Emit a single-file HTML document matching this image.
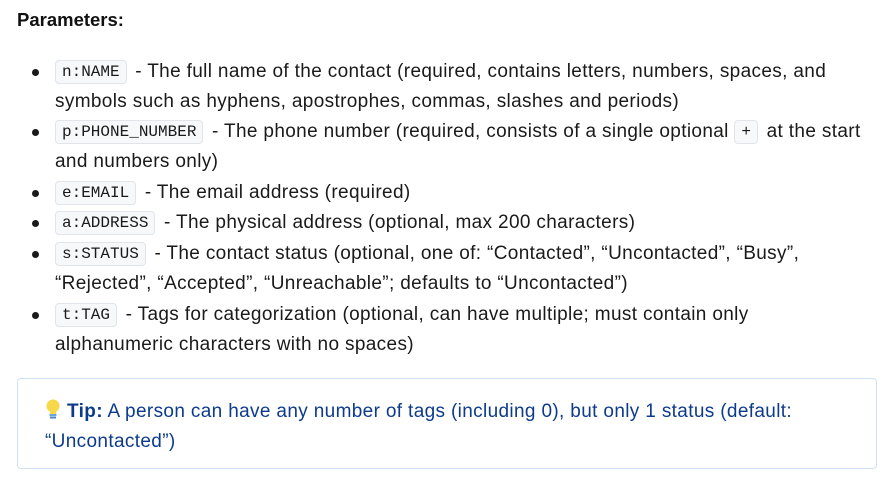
<!DOCTYPE html>
<html><head><meta charset="utf-8"><style>
body{margin:0;width:888px;height:485px;background:#fff;font-family:"Liberation Sans","DejaVu Sans",sans-serif;color:#1a1a1a;overflow:hidden}
h4{position:absolute;left:17px;top:9px;margin:0;font-size:18.5px;font-weight:bold;color:#111}
.l{position:absolute;left:55px;height:30px;line-height:30px;font-size:19px;white-space:nowrap;letter-spacing:0.35px}
.b::before{content:"";position:absolute;left:-23px;top:12px;width:7px;height:7px;border-radius:50%;background:#1a1a1a}
code{display:inline-block;font-family:"Liberation Mono","DejaVu Sans Mono",monospace;font-size:16px;line-height:22px;background:#f6f8fa;border:1px solid #e1e4e8;border-radius:4px;padding:0 6px;margin-right:3px;vertical-align:1px;letter-spacing:0}
.tip{position:absolute;left:17px;top:378px;width:860px;height:91px;border:1.5px solid #cfe0f7;border-radius:4px;box-sizing:border-box;color:#0d3b8c;font-size:19px}
.tip .l{left:27px}
</style></head><body>
<h4>Parameters:</h4>
<div class="l b" style="top:57px"><code>n:NAME</code> - The full name of the contact (required, contains letters, numbers, spaces, and</div>
<div class="l" style="top:87px">symbols such as hyphens, apostrophes, commas, slashes and periods)</div>
<div class="l b" style="top:117px"><code>p:PHONE_NUMBER</code> - The phone number (required, consists of a single optional <code>+</code> at the start</div>
<div class="l" style="top:147px">and numbers only)</div>
<div class="l b" style="top:178px"><code>e:EMAIL</code> - The email address (required)</div>
<div class="l b" style="top:208px"><code>a:ADDRESS</code> - The physical address (optional, max 200 characters)</div>
<div class="l b" style="top:239px"><code>s:STATUS</code> - The contact status (optional, one of: “Contacted”, “Uncontacted”, “Busy”,</div>
<div class="l" style="top:269px">“Rejected”, “Accepted”, “Unreachable”; defaults to “Uncontacted”)</div>
<div class="l b" style="top:300px"><code>t:TAG</code> - Tags for categorization (optional, can have multiple; must contain only</div>
<div class="l" style="top:330px">alphanumeric characters with no spaces)</div>
<div class="tip">
<div class="l" style="top:18px"><svg width="16" height="22" viewBox="0 0 16 22" style="vertical-align:-4px;margin-right:6px"><circle cx="8" cy="7" r="6.5" fill="#f7d84a"/><rect x="5" y="11" width="6" height="5" fill="#f7d84a"/><rect x="4.5" y="15" width="7" height="2" fill="#6aa5e0"/><rect x="5" y="17.5" width="6" height="2" fill="#4a86cc"/></svg><b>Tip:</b> A person can have any number of tags (including 0), but only 1 status (default:</div>
<div class="l" style="top:48px">“Uncontacted”)</div>
</div>
</body></html>
